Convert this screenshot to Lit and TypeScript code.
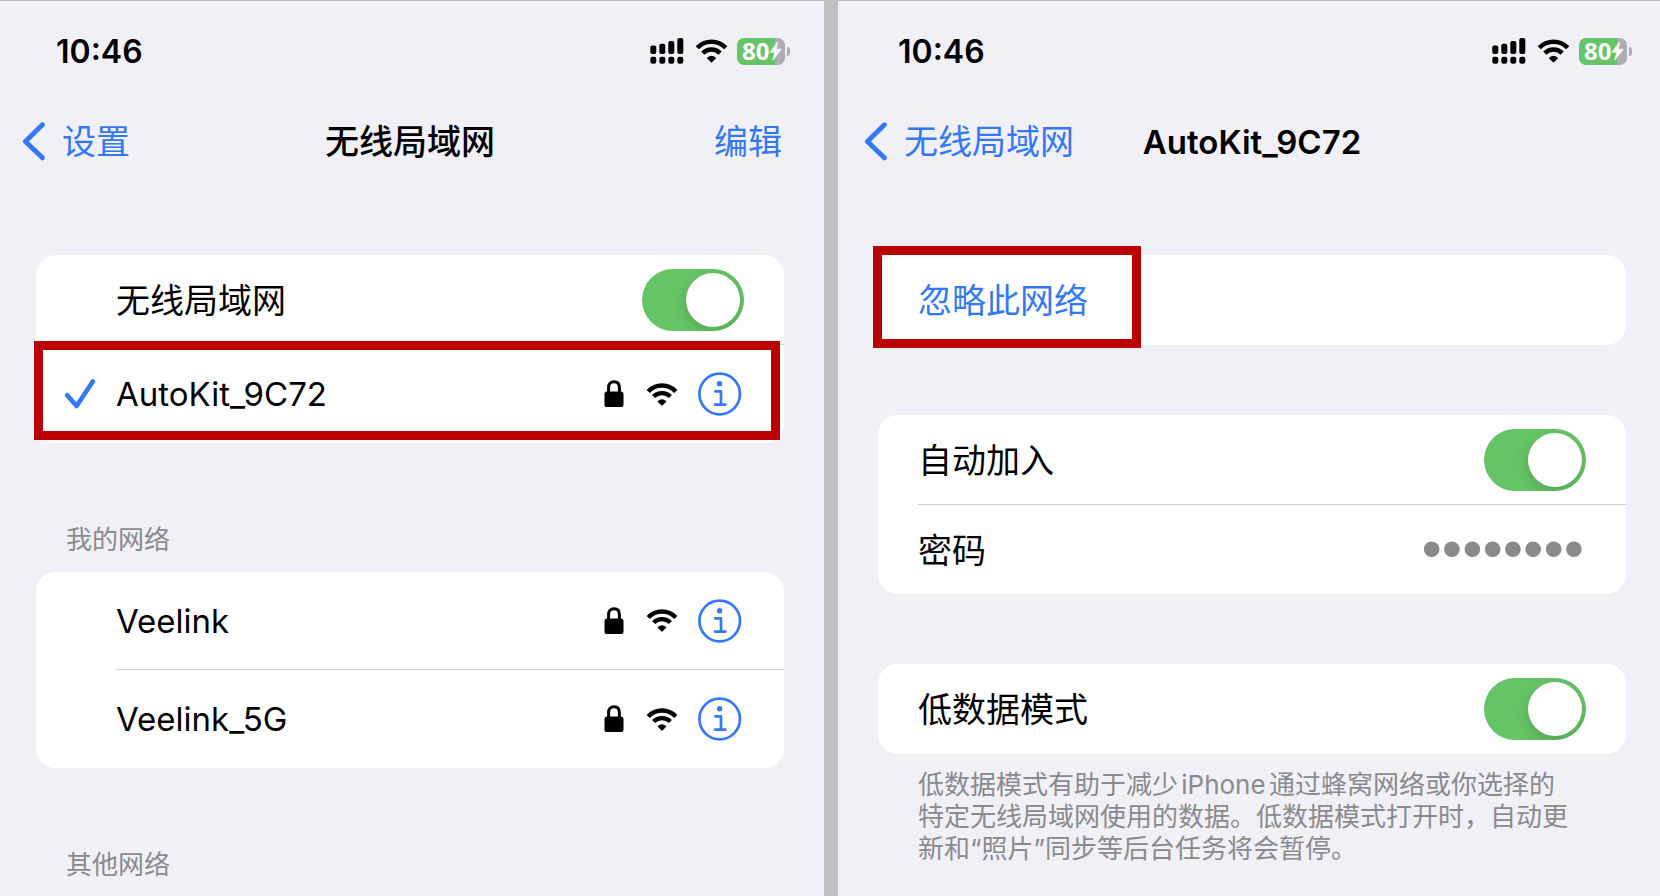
import { LitElement, html, css, svg, nothing } from "lit";
import { customElement, property } from "lit/decorators.js";

const wifiShape = svg`
  <path d="M2.2 8.4A19 19 0 0 1 29.8 8.4" fill="none" stroke="currentColor" stroke-width="4.4"/>
  <path d="M7.6 13.6A11.8 11.8 0 0 1 24.4 13.6" fill="none" stroke="currentColor" stroke-width="4.3"/>
  <path d="M12.2 18.4Q16 15.2 19.8 18.4L16 22Z" fill="currentColor" stroke="currentColor" stroke-width="1.2" stroke-linejoin="round"/>`;

const base = css`
  * {
    box-sizing: border-box;
    margin: 0;
  }
  svg {
    display: block;
    flex: none;
  }
  button {
    font: inherit;
    color: inherit;
    background: none;
    border: 0;
    padding: 0;
    cursor: pointer;
  }
`;

@customElement("status-bar")
class StatusBar extends LitElement {
  static styles = [
    base,
    css`
      :host {
        display: block;
      }
      .bar {
        display: flex;
        align-items: center;
        justify-content: space-between;
        height: 100px;
        padding-left: 20px;
        margin-right: -6px;
      }
      .time {
        padding-top: 2px;
        font-size: 32px;
        font-weight: 600;
      }
      .icons {
        display: flex;
        align-items: center;
        gap: 9px;
      }
      .battery {
        display: flex;
        align-items: center;
        gap: 2px;
      }
      .cell {
        display: flex;
        align-items: center;
        width: 48px;
        height: 27px;
        padding-left: 5px;
        border-radius: 7px;
        background: linear-gradient(to right, #65c466 80%, #aeaeb2 80%);
        color: #fff;
        font: 700 24px/24px "Open Sans", sans-serif;
      }
      .nub {
        width: 3px;
        height: 9px;
        border-radius: 0 4px 4px 0;
        background: #aeaeb2;
      }
    `,
  ];

  render() {
    return html`
      <div class="bar">
        <span class="time">10:46</span>
        <div class="icons">
          <svg width="36" height="28" viewBox="0 0 36 28" role="img" aria-label="信号">
            ${[8.5, 6.8, 4, 1].map(
              (top, i) => svg`
                <rect x=${i * 9 + 0.3} y=${top} width="6" height=${17 - top} rx="2"/>
                <rect x=${i * 9 + 0.3} y="19.8" width="6" height="7" rx="2.2"/>`
            )}
          </svg>
          <svg width="33" height="25" viewBox="0 0 32 24" role="img" aria-label="无线局域网">${wifiShape}</svg>
          <div class="battery">
            <span class="cell">
              80
              <svg width="13" height="20" viewBox="0 0 13 20" aria-hidden="true">
                <path d="M8.6 1L1 11.2H5.8L3.8 19L12.2 8.4H7.2Z" fill="#fff" stroke="#fff" stroke-width=".8" stroke-linejoin="round"/>
              </svg>
            </span>
            <span class="nub"></span>
          </div>
        </div>
      </div>
    `;
  }
}

@customElement("nav-bar")
class NavBar extends LitElement {
  @property() back = "";
  @property() heading = "";
  @property() action = "";

  static styles = [
    base,
    css`
      :host {
        display: block;
        padding-bottom: 74px;
      }
      .bar {
        display: grid;
        grid-template-columns: 1fr auto 1fr;
        align-items: center;
        height: 80px;
        margin: 0 -14px;
        padding-top: 2px;
        font-size: 34px;
        line-height: 40px;
      }
      .back {
        display: flex;
        align-items: center;
        gap: 16px;
        justify-self: start;
        color: #3478f6;
        white-space: nowrap;
      }
      .title {
        font-size: inherit;
        font-weight: 500;
        white-space: nowrap;
      }
      .latin {
        font-size: 33px;
        font-weight: 600;
      }
      .action {
        justify-self: end;
        margin-right: 16px;
        color: #3478f6;
      }
    `,
  ];

  render() {
    const latin = /^[\x00-\x7f]+$/.test(this.heading);
    return html`
      <div class="bar">
        <button class="back">
          <svg width="24" height="40" viewBox="0 0 24 40" aria-hidden="true">
            <path d="M20.4 2.8L3.4 19.4L20.4 35.8" fill="none" stroke="currentColor" stroke-width="4.9" stroke-linecap="round" stroke-linejoin="round"/>
          </svg>
          ${this.back}
        </button>
        <h1 class=${latin ? "title latin" : "title"}>${this.heading}</h1>
        ${this.action ? html`<button class="action">${this.action}</button>` : nothing}
      </div>
    `;
  }
}

@customElement("app-root")
class AppRoot extends LitElement {
  static styles = [
    base,
    css`
      :host {
        display: grid;
        grid-template-columns: 412fr 411fr;
        gap: 14px;
        min-height: 100vh;
        background: #c0c0c0;
        color: #000;
        font-family: Inter, "Noto Sans CJK SC", sans-serif;
        font-size: 34px;
        line-height: 40px;
      }
      .phone {
        min-width: 0;
        border-top: 1px solid #bcbcbe;
        background: #f1f0f6;
      }
      .list {
        padding: 0 40px 0 36px;
      }
      .detail {
        padding: 0 34px 0 40px;
      }
      .card {
        position: relative;
        border-radius: 20px;
        background: #fff;
      }
      .card + .card {
        margin-top: 70px;
      }
      .row {
        display: flex;
        align-items: center;
        justify-content: space-between;
        min-height: 90px;
        margin-left: 40px;
        padding-right: 40px;
      }
      .row:has(+ .row) {
        border-bottom: 1px solid #cfcfd1;
      }
      .row + .row {
        min-height: 89px;
      }
      .row > label,
      .forget {
        padding-top: 2px;
      }
      .list .row {
        margin-left: 80px;
      }
      .row.network {
        position: relative;
        min-height: 98px;
        padding-right: 42px;
        font-size: 33px;
      }
      .check {
        position: absolute;
        left: -52px;
      }
      .marks {
        display: flex;
        align-items: center;
        gap: 20px;
      }
      .info,
      .forget {
        color: #3478f6;
      }
      .switch {
        appearance: none;
        flex: none;
        width: 102px;
        height: 62px;
        margin: 0;
        padding: 4px;
        border-radius: 31px;
        background: #e9e9ea;
        overflow: hidden;
        cursor: pointer;
      }
      .switch::before {
        content: "";
        display: block;
        width: 54px;
        height: 54px;
        border-radius: 50%;
        background: #fff;
        box-shadow: 0 5px 14px rgba(0, 0, 0, 0.16);
      }
      .switch:checked {
        background: #65c466;
      }
      .switch:checked::before {
        margin-left: auto;
      }
      .secret {
        width: 240px;
        height: 60px;
        padding: 0 2px 4px 0;
        border: 0;
        outline: 0;
        background: none;
        color: #8a8a8d;
        font: 58px/56px "Liberation Sans", sans-serif;
        text-align: right;
      }
      .caption,
      .note {
        color: #8a8a8e;
        font-size: 26px;
        font-weight: 400;
        line-height: 32px;
      }
      .caption {
        padding: 81px 30px 0;
      }
      .caption + .card {
        margin-top: 16px;
      }
      .note {
        padding: 15px 0 0 40px;
        text-autospace: normal;
      }
      .highlight {
        position: absolute;
        border: 9px solid #ba0000;
        pointer-events: none;
      }
      .joined {
        inset: 86px 4px 3px -2px;
      }
      .ignored {
        inset: -9px auto -3px -5px;
        width: 268px;
      }
    `,
  ];

  private network(name: string, joined = false) {
    return html`
      <div class="row network">
        ${joined
          ? html`<svg class="check" width="32" height="32" viewBox="0 0 32 32" role="img" aria-label="已连接">
              <path d="M3.2 17.2L12.6 28L28.8 3.4" fill="none" stroke="#3478f6" stroke-width="4.6" stroke-linecap="round" stroke-linejoin="round"/>
            </svg>`
          : nothing}
        <span>${name}</span>
        <div class="marks">
          <svg width="22" height="28" viewBox="0 1 22 28" role="img" aria-label="加密">
            <rect x=".5" y="12.6" width="19" height="15.4" rx="2.6"/>
            <path d="M4.6 13V8.6C4.6 4.8 6.6 2.8 10 2.8S15.4 4.8 15.4 8.6V13" fill="none" stroke="#000" stroke-width="3"/>
          </svg>
          <svg width="32" height="23" viewBox="0 0 32 23" role="img" aria-label="信号强度">${wifiShape}</svg>
          <button class="info" aria-label="${name} 详细信息">
            <svg width="44" height="44" viewBox="0 0 44 44" fill="none" stroke="currentColor" stroke-width="2.7">
              <circle cx="21.7" cy="22" r="20.3"/>
              <circle cx="21.6" cy="11.8" r="2.7" fill="currentColor" stroke="none"/>
              <path d="M17.4 19.4H23V32.6M17 32.6H27.4" stroke-linecap="round" stroke-linejoin="round"/>
            </svg>
          </button>
        </div>
      </div>
    `;
  }

  private toggle(id: string, label: string) {
    return html`
      <div class="row">
        <label for=${id}>${label}</label>
        <input class="switch" type="checkbox" role="switch" id=${id} checked />
      </div>
    `;
  }

  render() {
    return html`
      <section class="phone list">
        <status-bar></status-bar>
        <nav-bar back="设置" heading="无线局域网" action="编辑"></nav-bar>
        <div class="card">
          ${this.toggle("wlan", "无线局域网")} ${this.network("AutoKit_9C72", true)}
          <div class="highlight joined"></div>
        </div>
        <h2 class="caption">我的网络</h2>
        <div class="card">${this.network("Veelink")} ${this.network("Veelink_5G")}</div>
        <h2 class="caption">其他网络</h2>
      </section>
      <section class="phone detail">
        <status-bar></status-bar>
        <nav-bar back="无线局域网" heading="AutoKit_9C72"></nav-bar>
        <div class="card">
          <div class="row"><button class="forget">忽略此网络</button></div>
          <div class="highlight ignored"></div>
        </div>
        <div class="card">
          ${this.toggle("auto-join", "自动加入")}
          <div class="row">
            <label for="password">密码</label>
            <input class="secret" type="password" id="password" value="12345678" readonly />
          </div>
        </div>
        <div class="card">${this.toggle("low-data", "低数据模式")}</div>
        <p class="note">
          低数据模式有助于减少iPhone通过蜂窝网络或你选择的<br />特定无线局域网使用的数据。低数据模式打开时，自动更<br />新和“照片”同步等后台任务将会暂停。
        </p>
      </section>
    `;
  }
}
